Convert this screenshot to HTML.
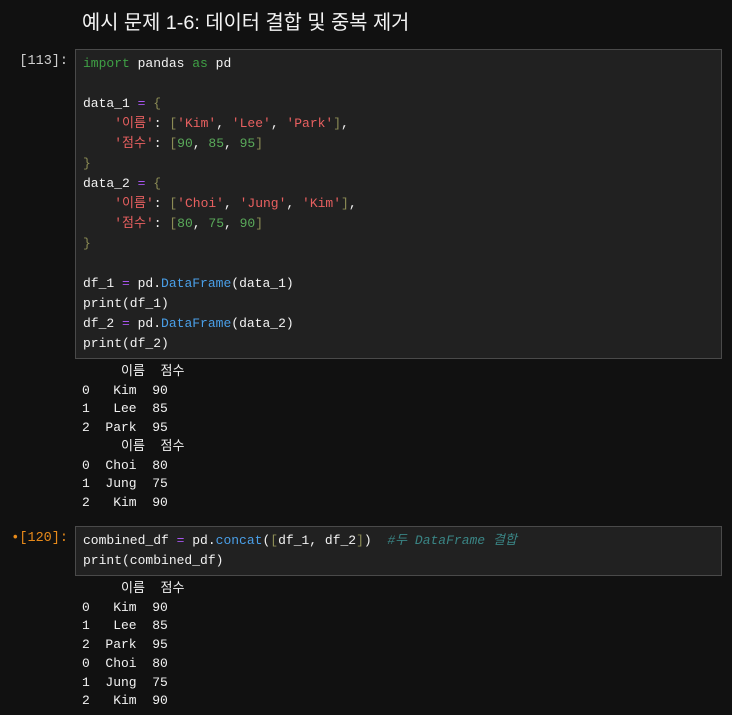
<!DOCTYPE html>
<html><head><meta charset="utf-8"><style>
body{margin:0;background:#111111;width:732px;height:715px;overflow:hidden;color:#f2f2f2;font-family:"Liberation Mono","Noto Sans CJK KR",monospace;font-size:13px;}
.t{position:absolute;left:82px;top:6px;font-family:"Liberation Sans","Noto Sans CJK KR",sans-serif;font-size:19.8px;color:#f4f4f4;}
.p{position:absolute;left:0;width:68px;text-align:right;color:#d0d0d0;font-size:13.5px;}
.cell{position:absolute;left:75px;width:645px;background:#212121;border:1px solid #4a4a4a;}
pre{margin:0;font-family:inherit;white-space:pre;}
.code{padding:4px 0 0 7px;line-height:20px;}
.out{position:absolute;left:82px;line-height:18.7px;color:#f2f2f2;}
.k{color:#3fa045}.s{color:#e86060}.n{color:#5aaa5a}.b{color:#8c8c55}.o{color:#a855f0}.f{color:#4a9fe8}.c{color:#3a8585;font-style:italic}
</style></head><body>
<div class="t">예시 문제 1-6: 데이터 결합 및 중복 제거</div>
<div class="p" style="top:54px">[113]:</div>
<div class="cell" style="top:49px;height:308px"><pre class="code"><span class="k">import</span> pandas <span class="k">as</span> pd

data_1 <span class="o">=</span> <span class="b">{</span>
    <span class="s">'이름'</span>: <span class="b">[</span><span class="s">'Kim'</span>, <span class="s">'Lee'</span>, <span class="s">'Park'</span><span class="b">]</span>,
    <span class="s">'점수'</span>: <span class="b">[</span><span class="n">90</span>, <span class="n">85</span>, <span class="n">95</span><span class="b">]</span>
<span class="b">}</span>
data_2 <span class="o">=</span> <span class="b">{</span>
    <span class="s">'이름'</span>: <span class="b">[</span><span class="s">'Choi'</span>, <span class="s">'Jung'</span>, <span class="s">'Kim'</span><span class="b">]</span>,
    <span class="s">'점수'</span>: <span class="b">[</span><span class="n">80</span>, <span class="n">75</span>, <span class="n">90</span><span class="b">]</span>
<span class="b">}</span>

df_1 <span class="o">=</span> pd.<span class="f">DataFrame</span>(data_1)
print(df_1)
df_2 <span class="o">=</span> pd.<span class="f">DataFrame</span>(data_2)
print(df_2)</pre></div>
<pre class="out" style="top:363px">     이름  점수
0   Kim  90
1   Lee  85
2  Park  95
     이름  점수
0  Choi  80
1  Jung  75
2   Kim  90</pre>
<div class="p" style="top:531px;color:#e88a1a">•[120]:</div>
<div class="cell" style="top:526px;height:48px"><pre class="code">combined_df <span class="o">=</span> pd.<span class="f">concat</span>(<span class="b">[</span>df_1, df_2<span class="b">]</span>)  <span class="c">#두 DataFrame 결합</span>
print(combined_df)</pre></div>
<pre class="out" style="top:580px">     이름  점수
0   Kim  90
1   Lee  85
2  Park  95
0  Choi  80
1  Jung  75
2   Kim  90</pre>
</body></html>
